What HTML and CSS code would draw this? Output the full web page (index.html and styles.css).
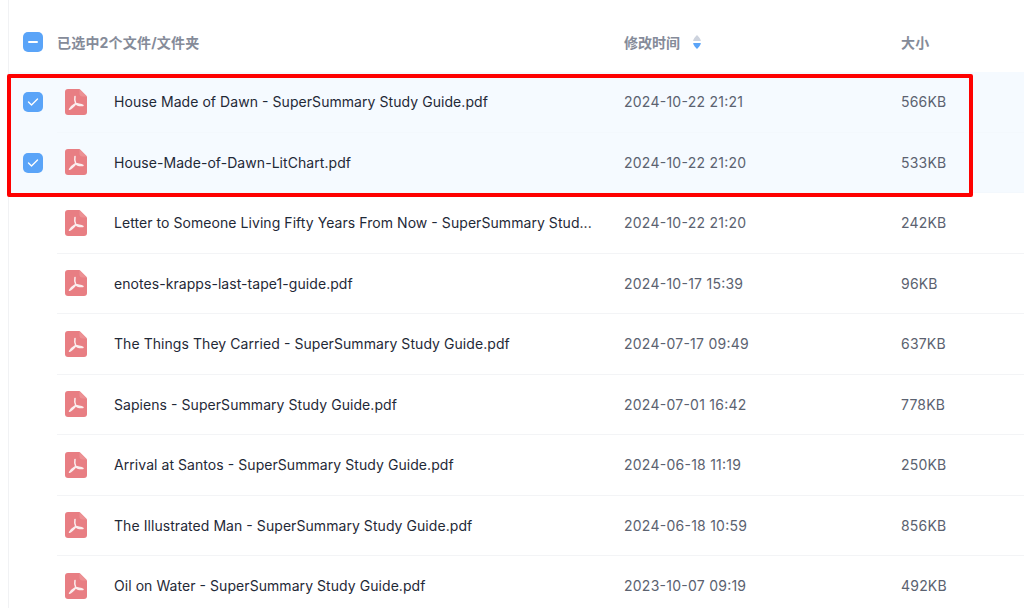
FILE: index.html
```html
<!DOCTYPE html>
<html lang="zh">
<head>
<meta charset="utf-8">
<title>文件列表</title>
<link rel="stylesheet" href="styles.css">
</head>
<body>
<svg class="defs" width="0" height="0" aria-hidden="true">
  <symbol id="pdf" viewBox="0 0 22 26">
    <path d="M3 0H14.500L22 7.500V23a3 3 0 0 1-3 3H3a3 3 0 0 1-3-3V3a3 3 0 0 1 3-3Z" fill="#e87e83"/>
    <path d="M14.500 0L22 7.500H17.500a3 3 0 0 1-3-3Z" fill="#ec9093"/>
    <path d="M10 7.500C9.600 9 10 12.500 10.800 14.500M4.500 20.300C5.500 20.300 8.800 17.500 10.800 14.500M18 16.400C16.500 15.600 12.500 15.200 10.800 14.500M10.800 14.500C12 16.400 14 16.800 18 16.400M10.800 14.500C9 15.600 5.500 18.500 4.500 20.300" fill="none" stroke="#fbeeee" stroke-width="1.500" stroke-linecap="round" stroke-linejoin="round"/>
  </symbol>
</svg>
<main class="list">
  <div class="row head">
    <span class="check"><span class="box"><span class="dash"></span></span></span>
    <span class="name">已选中2个文件/文件夹</span>
    <span class="time">修改时间<svg class="sort" width="10" height="16" viewBox="0 0 10 16"><path d="M5 1C6.500 2.500 8.300 4.500 8.800 6.200a.6.600 0 0 1-.6.800H1.800a.6.600 0 0 1-.6-.800C1.700 4.500 3.500 2.500 5 1Z" fill="#cdd3de"/><path d="M1.800 9H8.200a.6.600 0 0 1 .6.800C8.300 11.500 6.500 13.500 5 15 3.500 13.500 1.700 11.500 1.200 9.800A.6.600 0 0 1 1.800 9Z" fill="#5aa4f8"/></svg></span>
    <span class="size">大小</span>
  </div>
  <div class="row item selected">
    <span class="check"><span class="box"><svg width="12" height="10" viewBox="0 0 12 10"><path d="M1.500 5L4.500 8L10.500 2" fill="none" stroke="#fff" stroke-width="1.400" stroke-linecap="round" stroke-linejoin="round"/></svg></span></span>
    <span class="cell"><svg class="icon"><use href="#pdf"/></svg><span class="name">House Made of Dawn - SuperSummary Study Guide.pdf</span><span class="time">2024-10-22 21:21</span><span class="size">566KB</span></span>
  </div>
  <div class="row item selected">
    <span class="check"><span class="box"><svg width="12" height="10" viewBox="0 0 12 10"><path d="M1.500 5L4.500 8L10.500 2" fill="none" stroke="#fff" stroke-width="1.400" stroke-linecap="round" stroke-linejoin="round"/></svg></span></span>
    <span class="cell"><svg class="icon"><use href="#pdf"/></svg><span class="name">House-Made-of-Dawn-LitChart.pdf</span><span class="time">2024-10-22 21:20</span><span class="size">533KB</span></span>
  </div>
  <div class="row item">
    <span class="check"></span>
    <span class="cell"><svg class="icon"><use href="#pdf"/></svg><span class="name">Letter to Someone Living Fifty Years From Now - SuperSummary Stud...</span><span class="time">2024-10-22 21:20</span><span class="size">242KB</span></span>
  </div>
  <div class="row item">
    <span class="check"></span>
    <span class="cell"><svg class="icon"><use href="#pdf"/></svg><span class="name">enotes-krapps-last-tape1-guide.pdf</span><span class="time">2024-10-17 15:39</span><span class="size">96KB</span></span>
  </div>
  <div class="row item">
    <span class="check"></span>
    <span class="cell"><svg class="icon"><use href="#pdf"/></svg><span class="name">The Things They Carried - SuperSummary Study Guide.pdf</span><span class="time">2024-07-17 09:49</span><span class="size">637KB</span></span>
  </div>
  <div class="row item">
    <span class="check"></span>
    <span class="cell"><svg class="icon"><use href="#pdf"/></svg><span class="name">Sapiens - SuperSummary Study Guide.pdf</span><span class="time">2024-07-01 16:42</span><span class="size">778KB</span></span>
  </div>
  <div class="row item">
    <span class="check"></span>
    <span class="cell"><svg class="icon"><use href="#pdf"/></svg><span class="name">Arrival at Santos - SuperSummary Study Guide.pdf</span><span class="time">2024-06-18 11:19</span><span class="size">250KB</span></span>
  </div>
  <div class="row item">
    <span class="check"></span>
    <span class="cell"><svg class="icon"><use href="#pdf"/></svg><span class="name">The Illustrated Man - SuperSummary Study Guide.pdf</span><span class="time">2024-06-18 10:59</span><span class="size">856KB</span></span>
  </div>
  <div class="row item">
    <span class="check"></span>
    <span class="cell"><svg class="icon"><use href="#pdf"/></svg><span class="name">Oil on Water - SuperSummary Study Guide.pdf</span><span class="time">2023-10-07 09:19</span><span class="size">492KB</span></span>
  </div>
  <div class="mark"></div>
</main>
</body>
</html>
```
FILE: styles.css
```css
html, body {
  margin: 0;
  height: 608px;
  overflow: hidden;
  background: #fff;
}

.defs {
  position: absolute;
}

.list {
  position: relative;
  margin-left: 8px;
  height: 608px;
  border-left: 1px solid #f1f2f4;
  font-family: Inter, "Noto Sans CJK SC", sans-serif;
  font-size: 14px;
  font-feature-settings: "calt" 1, "kern" 1;
  letter-spacing: 0.06px;
  color: #1f2937;
}

.row {
  display: flex;
  align-items: center;
}

.head {
  height: 72px;
  padding-top: 12px;
  box-sizing: border-box;
  font-weight: 700;
  color: #858b99;
}

.item {
  height: 60.5px;
}

.check {
  display: flex;
  width: 48px;
  flex: none;
  padding-left: 14px;
  box-sizing: border-box;
}

.box {
  display: flex;
  align-items: center;
  justify-content: center;
  width: 20px;
  height: 20px;
  border-radius: 5px;
  background: #5aa4f8;
}

.dash {
  width: 10px;
  height: 2px;
  border-radius: 1px;
  background: #fff;
}

.cell {
  display: flex;
  align-items: center;
  flex: 1;
  align-self: stretch;
  border-bottom: 1px solid #f3f4f6;
}

.selected {
  background: #f5faff;
}

.selected .cell {
  border-bottom-color: #f3f8fd;
}

.icon {
  width: 22px;
  height: 26px;
  flex: none;
  margin-left: 8px;
  margin-right: 27px;
}

.cell .name {
  width: 510px;
  flex: none;
}

.head .name {
  width: 567px;
  flex: none;
  letter-spacing: 0.2px;
}

.time {
  display: flex;
  align-items: center;
  width: 277px;
  flex: none;
  letter-spacing: 0.25px;
  color: #5b6270;
}

.head .time {
  letter-spacing: 0;
}

.head .time,
.head .size {
  color: #858b99;
}

.sort {
  margin-left: 12px;
}

.size {
  letter-spacing: 0.2px;
  color: #5b6270;
}

.mark {
  position: absolute;
  left: -2px;
  top: 74px;
  width: 966px;
  height: 123px;
  box-sizing: border-box;
  border: 4px solid #fe0000;
  border-radius: 2px;
}
```
